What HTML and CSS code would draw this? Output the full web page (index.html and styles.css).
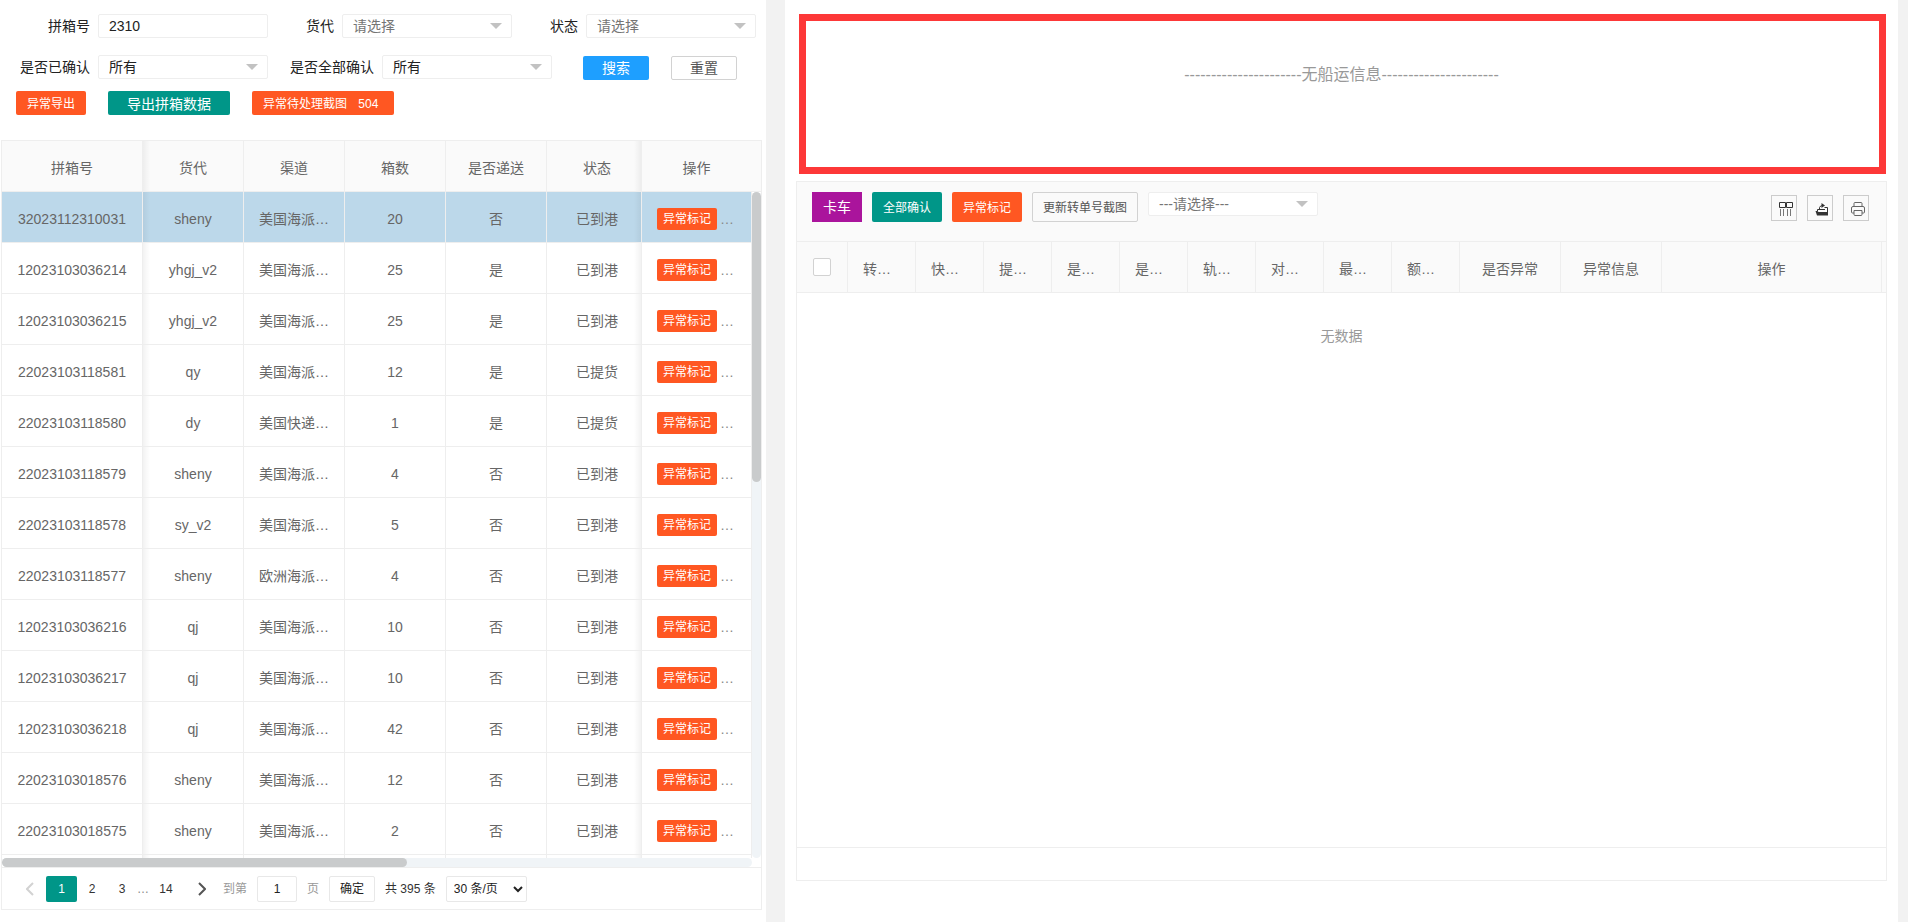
FILE: index.html
```html
<!DOCTYPE html>
<html lang="zh-CN">
<head>
<meta charset="utf-8">
<title>拼箱管理</title>
<link rel="stylesheet" href="styles.css">
</head>
<body>
<div class="page">
  <section class="panel list-panel">
    <form class="search">
      <div class="search-row search-row-wide">
        <div class="field"><label for="box-no">拼箱号</label><input class="control" id="box-no" type="text" value="2310"></div>
        <div class="field"><label for="agent">货代</label><span class="pick"><select class="control placeholder" id="agent"><option>请选择</option></select></span></div>
        <div class="field"><label for="status">状态</label><span class="pick"><select class="control placeholder" id="status"><option>请选择</option></select></span></div>
      </div>
      <div class="search-row">
        <div class="field"><label for="confirmed">是否已确认</label><span class="pick"><select class="control" id="confirmed"><option>所有</option></select></span></div>
        <div class="field"><label for="all-confirmed">是否全部确认</label><span class="pick"><select class="control" id="all-confirmed"><option>所有</option></select></span></div>
        <div class="search-actions">
          <button type="button" class="btn btn-form btn-blue">搜索</button>
          <button type="button" class="btn btn-form btn-plain">重置</button>
        </div>
      </div>
      <div class="search-buttons">
        <button type="button" class="btn btn-orange">异常导出</button>
        <button type="button" class="btn btn-form btn-green">导出拼箱数据</button>
        <button type="button" class="btn btn-orange btn-count">异常待处理截图 <span>504</span></button>
      </div>
    </form>

    <div class="grid-box">
      <table class="grid head-grid">
        <colgroup><col class="c-no"><col class="c-mid"><col class="c-mid"><col class="c-mid"><col class="c-mid"><col class="c-status"><col></colgroup>
        <thead><tr><th>拼箱号</th><th>货代</th><th>渠道</th><th>箱数</th><th>是否递送</th><th>状态</th><th>操作</th></tr></thead>
      </table>
      <div class="grid-body">
        <table class="grid">
          <colgroup><col class="c-no"><col class="c-mid"><col class="c-mid"><col class="c-mid"><col class="c-mid"><col class="c-status"><col></colgroup>
          <tbody>
            <tr class="selected"><td>32023112310031</td><td>sheny</td><td>美国海派…</td><td>20</td><td>否</td><td>已到港</td><td><button type="button" class="btn btn-xs btn-orange">异常标记</button><span class="more">…</span></td></tr>
            <tr><td>12023103036214</td><td>yhgj_v2</td><td>美国海派…</td><td>25</td><td>是</td><td>已到港</td><td><button type="button" class="btn btn-xs btn-orange">异常标记</button><span class="more">…</span></td></tr>
            <tr><td>12023103036215</td><td>yhgj_v2</td><td>美国海派…</td><td>25</td><td>是</td><td>已到港</td><td><button type="button" class="btn btn-xs btn-orange">异常标记</button><span class="more">…</span></td></tr>
            <tr><td>22023103118581</td><td>qy</td><td>美国海派…</td><td>12</td><td>是</td><td>已提货</td><td><button type="button" class="btn btn-xs btn-orange">异常标记</button><span class="more">…</span></td></tr>
            <tr><td>22023103118580</td><td>dy</td><td>美国快递…</td><td>1</td><td>是</td><td>已提货</td><td><button type="button" class="btn btn-xs btn-orange">异常标记</button><span class="more">…</span></td></tr>
            <tr><td>22023103118579</td><td>sheny</td><td>美国海派…</td><td>4</td><td>否</td><td>已到港</td><td><button type="button" class="btn btn-xs btn-orange">异常标记</button><span class="more">…</span></td></tr>
            <tr><td>22023103118578</td><td>sy_v2</td><td>美国海派…</td><td>5</td><td>否</td><td>已到港</td><td><button type="button" class="btn btn-xs btn-orange">异常标记</button><span class="more">…</span></td></tr>
            <tr><td>22023103118577</td><td>sheny</td><td>欧洲海派…</td><td>4</td><td>否</td><td>已到港</td><td><button type="button" class="btn btn-xs btn-orange">异常标记</button><span class="more">…</span></td></tr>
            <tr><td>12023103036216</td><td>qj</td><td>美国海派…</td><td>10</td><td>否</td><td>已到港</td><td><button type="button" class="btn btn-xs btn-orange">异常标记</button><span class="more">…</span></td></tr>
            <tr><td>12023103036217</td><td>qj</td><td>美国海派…</td><td>10</td><td>否</td><td>已到港</td><td><button type="button" class="btn btn-xs btn-orange">异常标记</button><span class="more">…</span></td></tr>
            <tr><td>12023103036218</td><td>qj</td><td>美国海派…</td><td>42</td><td>否</td><td>已到港</td><td><button type="button" class="btn btn-xs btn-orange">异常标记</button><span class="more">…</span></td></tr>
            <tr><td>22023103018576</td><td>sheny</td><td>美国海派…</td><td>12</td><td>否</td><td>已到港</td><td><button type="button" class="btn btn-xs btn-orange">异常标记</button><span class="more">…</span></td></tr>
            <tr><td>22023103018575</td><td>sheny</td><td>美国海派…</td><td>2</td><td>否</td><td>已到港</td><td><button type="button" class="btn btn-xs btn-orange">异常标记</button><span class="more">…</span></td></tr>
            <tr class="peek"><td></td><td></td><td></td><td></td><td></td><td></td><td></td></tr>
          </tbody>
        </table>
        <div class="track track-y"><div class="thumb"></div></div>
        <div class="track track-x"><div class="thumb"></div></div>
      </div>
      <nav class="pager" aria-label="分页">
        <button type="button" class="page-arrow off" aria-label="上一页"><svg viewBox="0 0 8 14" width="8" height="14"><path d="M7 1 1 7l6 6"/></svg></button>
        <a class="page-no current" href="#">1</a>
        <a class="page-no" href="#">2</a>
        <a class="page-no" href="#">3</a>
        <span class="page-gap">…</span>
        <a class="page-no" href="#">14</a>
        <button type="button" class="page-arrow next" aria-label="下一页"><svg viewBox="0 0 8 14" width="8" height="14"><path d="m1 1 6 6-6 6"/></svg></button>
        <label class="soft" for="goto">到第</label>
        <input class="goto" id="goto" type="text" value="1">
        <span class="soft">页</span>
        <button type="button" class="page-ok">确定</button>
        <span>共 395 条</span>
        <select class="page-size" aria-label="每页条数"><option>30 条/页</option></select>
      </nav>
    </div>
  </section>

  <section class="panel detail-panel">
    <div class="shipping">----------------------无船运信息----------------------</div>
    <div class="detail-box">
      <div class="toolbar">
        <button type="button" class="btn btn-form btn-tall btn-purple">卡车</button>
        <button type="button" class="btn btn-tall btn-green">全部确认</button>
        <button type="button" class="btn btn-tall btn-orange">异常标记</button>
        <button type="button" class="btn btn-tall btn-plain">更新转单号截图</button>
        <span class="pick"><select class="control placeholder" aria-label="请选择"><option>---请选择---</option></select></span>
        <div class="tools">
          <button type="button" class="tool" aria-label="筛选列"><svg viewBox="0 0 14 14" width="14" height="14"><path d="M.5.5h6v5h-6zM7.500.5h6v5h-6z"/><path class="thin" d="M1.500 7v7M4.500 7v7M8.500 7v7M11.500 7v7"/></svg></button>
          <button type="button" class="tool" aria-label="导出"><svg viewBox="0 0 14 14" width="14" height="14"><path class="fill" d="M.5 9h2l1 1H13v3.500H2z"/><path d="M2.500 9V7.500H10M9.500 5.500H12.500V10M4.500 7V5.500Q5 3.500 8 3.500"/><path class="fill" d="m6.500 1 3.500 2.500L6.500 6z"/></svg></button>
          <button type="button" class="tool" aria-label="打印"><svg class="grey" viewBox="0 0 14 14" width="14" height="14"><path d="M3 4V1.500Q3 .5 4 .5h6q1 0 1 1V4M3 11H1.500Q.5 11 .5 10V6Q.5 4.500 2 4.500h10q1.500 0 1.500 1.500v4q0 1-1 1H11"/><path d="M3 8.500h8v4q0 1-1 1H4q-1 0-1-1z"/></svg></button>
        </div>
      </div>
      <table class="grid detail-grid">
        <colgroup><col class="c-check"><col class="c-slim"><col class="c-slim"><col class="c-slim"><col class="c-slim"><col class="c-slim"><col class="c-slim"><col class="c-slim"><col class="c-slim"><col class="c-slim"><col class="c-mid"><col class="c-mid"><col><col class="c-end"></colgroup>
        <thead><tr><th class="pick-all"><input type="checkbox" class="check" aria-label="全选"></th><th class="cut">转…</th><th class="cut">快…</th><th class="cut">提…</th><th class="cut">是…</th><th class="cut">是…</th><th class="cut">轨…</th><th class="cut">对…</th><th class="cut">最…</th><th class="cut">额…</th><th>是否异常</th><th>异常信息</th><th>操作</th><th></th></tr></thead>
      </table>
      <div class="empty">无数据</div>
      <div class="detail-foot"></div>
    </div>
  </section>
</div>
</body>
</html>
```

FILE: styles.css
```css
* { box-sizing: border-box; }

body {
  margin: 0;
  background: #f2f2f2;
  color: #222;
  font: 14px/24px "Liberation Sans", "Noto Sans CJK SC", sans-serif;
}

button, input, select { font: inherit; margin: 0; }

.page {
  display: grid;
  grid-template-columns: minmax(0, 766fr) minmax(0, 1113fr);
  column-gap: 19px;
  min-height: 100vh;
  padding-right: 10px;
}

.panel { background: #fff; }

/* Search form */
.search {
  display: flex;
  flex-direction: column;
  padding: 14px 0 25px;
}

.search-row {
  display: flex;
  align-items: center;
  gap: 22px;
  height: 24px;
  margin-bottom: 17px;
  padding-left: 20px;
}

.search-row-wide { gap: 38px; padding-left: 48px; }

.field { display: flex; align-items: center; gap: 8px; white-space: nowrap; }

.control {
  display: block;
  width: 170px;
  height: 24px;
  padding: 0 10px;
  border: 1px solid #eee;
  border-radius: 2px;
  background: #fff;
  color: #222;
  line-height: 22px;
  appearance: none;
  outline: none;
}

.placeholder { color: #757575; }

.pick { position: relative; }

.pick::after {
  content: "";
  position: absolute;
  top: 9px;
  right: 10px;
  border: 6px solid transparent;
  border-top-color: #c2c2c2;
  border-bottom: 0;
  pointer-events: none;
}

.search-actions { display: flex; gap: 22px; padding: 1px 0 0 9px; }
.search-actions .btn { width: 66px; padding: 0; }

.search-buttons {
  display: flex;
  gap: 22px;
  margin-top: -5px;
  padding-left: 16px;
}

/* Buttons */
.btn {
  height: 24px;
  padding: 1px 10px 0;
  border: 1px solid transparent;
  border-radius: 2px;
  color: #fff;
  font-size: 12px;
  line-height: 20px;
  white-space: nowrap;
}

.btn-form { padding: 1px 18px 0; font-size: 14px; }
.btn-tall { height: 30px; line-height: 28px; }
.btn-xs { height: 22px; padding: 0 5px; vertical-align: middle; }
.btn-count { padding-right: 15px; }
.btn-count span { margin-left: 8px; }
.btn-blue { background: #1e9fff; }
.btn-green { background: #009688; }
.btn-orange { background: #ff5722; }
.btn-plain { border-color: #d2d2d2; background: transparent; color: #555; }
.btn-purple { padding: 0 10px; border-radius: 0; background: #aa149c; }

/* Tables */
.grid-box { margin: 0 4px 0 1px; border: 1px solid #eee; }

.grid {
  width: 100%;
  border-collapse: separate;
  border-spacing: 0;
  table-layout: fixed;
  color: #666;
}

.grid th, .grid td {
  height: 51px;
  padding: 4px 0 0;
  border: 0 solid #eee;
  border-width: 0 1px 1px 0;
  font-weight: 400;
  text-align: center;
  white-space: nowrap;
}

.grid th { background-color: #fafafa; }

.grid-box .grid td:last-child { padding: 3px 2px 0 0; }

.c-no { width: 141px; }
.c-mid { width: 101px; }
.c-status { width: 95px; }
.c-check { width: 51px; }
.c-slim { width: 68px; }
.c-end { width: 4px; }

.grid-box .grid th:nth-child(2), .grid-box .grid td:nth-child(2) {
  background-image: linear-gradient(to right, rgba(0, 0, 0, .05), transparent 7px);
}

.grid-box .grid th:nth-child(6), .grid-box .grid td:nth-child(6) {
  padding-left: 6px;
  background-image: linear-gradient(to left, rgba(0, 0, 0, .05), transparent 7px);
}

.grid-box .head-grid th:last-child { padding-right: 10px; border-right: 0; }

.grid .selected td { background-color: #bcd8ea; }
.grid-box .grid .peek td { height: 3px; padding: 0; border-bottom: 0; }

.more { margin-left: 3px; color: #888; vertical-align: middle; }

.grid-body { display: grid; grid-template-columns: minmax(0, 1fr) 9px; }

.track { border-radius: 5px; background: #f0f4f7; }
.track .thumb { border-radius: 5px; background: #c9cbcc; }
.track-y .thumb { height: 290px; }
.track-x .thumb { width: 54%; height: 9px; }

/* Pagination */
.pager {
  display: flex;
  align-items: center;
  height: 42px;
  padding-left: 12px;
  border-top: 1px solid #eee;
  color: #333;
  font-size: 12px;
  white-space: nowrap;
}

.page-no {
  width: 30px;
  color: #333;
  line-height: 26px;
  text-align: center;
  text-decoration: none;
}

.page-no.current { border-radius: 2px; background: #009688; color: #fff; width: 31px; }
.page-gap { width: 10px; color: #888; }
.page-gap + .page-no { margin-left: 4px; }

.page-arrow {
  display: flex;
  align-items: center;
  justify-content: center;
  width: 32px;
  height: 26px;
  padding: 0;
  border: 0;
  background: none;
}

.page-arrow svg { fill: none; stroke: #555; stroke-width: 2; }
.page-arrow.off svg { stroke: #d2d2d2; }
.page-arrow.next { width: 42px; }

.soft { color: #999; }

.goto, .page-ok, .page-size {
  height: 26px;
  border: 1px solid #e8e8e8;
  border-radius: 2px;
  background: #fff;
  color: #222;
}

.goto { width: 40px; margin: 0 10px; padding: 0; text-align: center; }
.page-ok { width: 46px; margin: 0 10px; padding: 0; }
.page-size { width: 81px; margin-left: 10px; padding: 0 3px; }

/* Detail panel */
.detail-panel {
  display: flex;
  flex-direction: column;
  padding: 14px 11px 41px;
}

.shipping {
  height: 160px;
  margin: 0 1px 7px 3px;
  padding: 42px 2px 0 0;
  border: 7px solid #fd3838;
  color: #999;
  font-size: 16px;
  text-align: center;
}

.detail-box {
  display: flex;
  flex: 1;
  flex-direction: column;
  border: 1px solid #eee;
}

.toolbar {
  display: flex;
  align-items: flex-start;
  gap: 10px;
  height: 60px;
  padding: 10px 17px 0 15px;
  border-bottom: 1px solid #eee;
  background: #fafafa;
}

.tools { display: flex; gap: 10px; margin: 3px 0 0 auto; }

.tool {
  display: flex;
  align-items: center;
  justify-content: center;
  width: 26px;
  height: 26px;
  padding: 2px 0 0 3px;
  border: 1px solid #ccc;
  background: none;
}

.tool svg { flex: none; fill: none; stroke: #333; stroke-width: 1; }
.tool .thin { stroke: #777; }
.tool .fill { fill: #333; stroke: none; }
.tool .grey { stroke: #666; }

.detail-grid th:last-child { border-right: 0; }
.detail-grid .cut { padding-left: 15px; text-align: left; }
.detail-grid .pick-all { padding-top: 0; }

.check {
  display: block;
  width: 18px;
  height: 18px;
  margin: 0 auto;
  border: 1px solid #d2d2d2;
  border-radius: 2px;
  background: #fff;
  appearance: none;
}

.empty {
  flex: 1;
  padding-top: 31px;
  color: #999;
  text-align: center;
}

.detail-foot { height: 33px; border-top: 1px solid #eee; }
```
